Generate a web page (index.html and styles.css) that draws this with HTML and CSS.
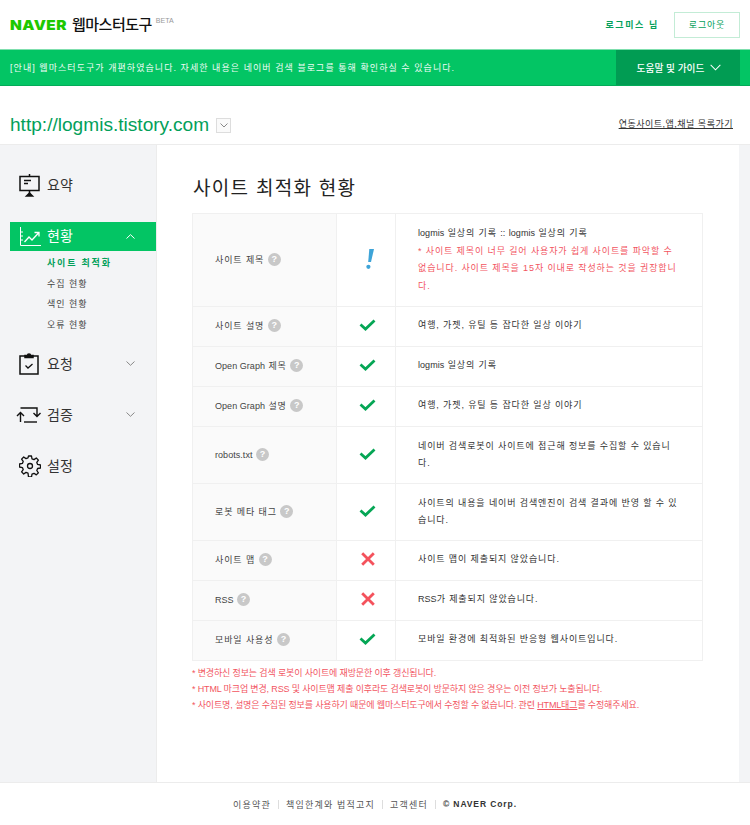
FILE: index.html
```html
<!DOCTYPE html>
<html lang="ko">
<head>
<meta charset="utf-8">
<title>네이버 웹마스터도구</title>
<link rel="stylesheet" href="styles.css">
</head>
<body>
<header class="top">
  <div class="brand"><span class="naver">NAVER</span><span class="wm">웹마스터도구</span><span class="beta">BETA</span></div>
  <div class="user"><span class="uname">로그미스 님</span><a class="logout">로그아웃</a></div>
</header>
<div class="notice">
  <p class="notice-text">[안내] 웹마스터도구가 개편하였습니다. 자세한 내용은 네이버 검색 블로그를 통해 확인하실 수 있습니다.</p>
  <div class="guide">도움말 및 가이드
    <svg class="guide-arrow" width="11" height="7" viewBox="0 0 12 7"><path d="M.7.7 6 6 11.3.7" fill="none" stroke="#fff" stroke-width="1.1"/></svg>
  </div>
</div>
<div class="siterow">
  <div class="site"><span class="siteurl">http://logmis.tistory.com</span>
    <span class="sitebtn"><svg width="8" height="5" viewBox="0 0 8 5"><path d="M.5.5 4 4 7.5.5" fill="none" stroke="#888"/></svg></span>
  </div>
  <a class="sitelink">연동사이트,앱,채널 목록가기</a>
</div>
<div class="body">
  <nav class="side">
    <div class="menu">
      <svg class="ico" width="22" height="24" viewBox="0 0 22 24" fill="none" stroke="#111" stroke-width="1.5"><path d="M1 3.5h19v14H1z"/><path d="M10.5 1v2.5M10.5 17.500v5"/><path d="M5 7.500h7M5 10.500h4" stroke-width="1.300"/><path d="M7.500 23l3-3 3 3z" fill="#111"/></svg>
      <span>요약</span>
    </div>
    <div class="menu on">
      <svg class="ico" width="22" height="20" viewBox="0 0 22 20" fill="none" stroke="#fff" stroke-width="1"><path d="M1.500 0v18.500H22"/><path d="M1.500 5H4M1.500 9H4M1.500 13H4"/><path d="M5.500 15l4.500-5 3 3 6.500-7M15.500 5.500h4.500v4" stroke-width="1.300"/></svg>
      <span>현황</span>
      <svg class="chev" width="9" height="5" viewBox="0 0 9 5"><path d="M.5 4.500 4.500.7l4 3.800" fill="none" stroke="#fff"/></svg>
    </div>
    <ul class="sub">
      <li class="cur">사이트 최적화</li>
      <li>수집 현황</li>
      <li>색인 현황</li>
      <li>오류 현황</li>
    </ul>
    <div class="menu m3">
      <svg class="ico" width="20" height="22" viewBox="0 0 20 22" fill="none" stroke="#111" stroke-width="1.500"><path d="M6 3H1v18h18V3h-5"/><path d="M6 4.500V2.500h2.500a1.500 1.500 0 0 1 3 0H14v2z" fill="#111"/><path d="M6.500 12.500l2.500 2.500 4.500-4" stroke-width="1.300"/></svg>
      <span>요청</span>
      <svg class="chev" width="9" height="5" viewBox="0 0 9 5"><path d="M.5.500l4 3.800 4-3.800" fill="none" stroke="#888"/></svg>
    </div>
    <div class="menu m4">
      <svg class="ico verify" width="26" height="16" viewBox="0 0 26 16" fill="none" stroke="#111" stroke-width="1.400"><path d="M4.500 15V6.500M1 9l3.500-3.500L8 9"/><path d="M4.500 1H21v8M17.500 6l3.500 3.500L24.500 6"/><path d="M8 15h13"/></svg>
      <span>검증</span>
      <svg class="chev" width="9" height="5" viewBox="0 0 9 5"><path d="M.5.500l4 3.800 4-3.800" fill="none" stroke="#888"/></svg>
    </div>
    <div class="menu m5">
      <svg class="ico" width="22" height="22" viewBox="0 0 22 22" fill="none" stroke="#111" stroke-width="1.300"><circle cx="11" cy="11" r="2.500"/><path d="M9.500 1h3l.5 2.800 2 .8 2.300-1.600 2.100 2.100-1.600 2.300.8 2 2.900.6v3l-2.900.5-.8 2 1.600 2.300-2.100 2.100-2.300-1.600-2 .8-.5 2.900h-3L9 18.200l-2-.8-2.300 1.600-2.100-2.100 1.600-2.300-.8-2L.500 12V9l2.900-.6.800-2-1.600-2.300 2.100-2.100L7 3.600l2-.8z" stroke-linejoin="round"/></svg>
      <span>설정</span>
    </div>
  </nav>
  <main class="main">
    <h1 class="title">사이트 최적화 현황</h1>
    <table class="tbl">
      <tr class="r93">
        <th>사이트 제목 <i class="q">?</i></th>
        <td class="st"><svg class="bang" width="8" height="20" viewBox="0 0 8 20"><path d="M3.300 0H8L5 13H2.200z" fill="#3ea4d8"/><circle cx="2.400" cy="17.800" r="2.100" fill="#3ea4d8"/></svg></td>
        <td class="tx"><span class="en">logmis</span> 일상의 기록 <span class="en">::</span> <span class="en">logmis</span> 일상의 기록<br><span class="warn">* 사이트 제목이 너무 길어 사용자가 쉽게 사이트를 파악할 수 없습니다. 사이트 제목을 15자 이내로 작성하는 것을 권장합니다.</span></td>
      </tr>
      <tr class="r40"><th>사이트 설명 <i class="q">?</i></th><td class="st"><svg class="ok" width="17" height="12" viewBox="0 0 17 12"><path d="M1.500 5.500 6.500 10 15.500 1.500" fill="none" stroke="#05a655" stroke-width="2.800"/></svg></td><td class="tx">여행, 가젯, 유틸 등 잡다한 일상 이야기</td></tr>
      <tr class="r40"><th><span class="en">Open Graph</span> 제목 <i class="q">?</i></th><td class="st"><svg class="ok" width="17" height="12" viewBox="0 0 17 12"><path d="M1.500 5.500 6.500 10 15.500 1.500" fill="none" stroke="#05a655" stroke-width="2.800"/></svg></td><td class="tx"><span class="en">logmis</span> 일상의 기록</td></tr>
      <tr class="r40"><th><span class="en">Open Graph</span> 설명 <i class="q">?</i></th><td class="st"><svg class="ok" width="17" height="12" viewBox="0 0 17 12"><path d="M1.500 5.500 6.500 10 15.500 1.500" fill="none" stroke="#05a655" stroke-width="2.800"/></svg></td><td class="tx">여행, 가젯, 유틸 등 잡다한 일상 이야기</td></tr>
      <tr class="r57"><th><span class="en">robots.txt</span> <i class="q">?</i></th><td class="st"><svg class="ok" width="17" height="12" viewBox="0 0 17 12"><path d="M1.500 5.500 6.500 10 15.500 1.500" fill="none" stroke="#05a655" stroke-width="2.800"/></svg></td><td class="tx">네이버 검색로봇이 사이트에 접근해 정보를 수집할 수 있습니다.</td></tr>
      <tr class="r57"><th>로봇 메타 태그 <i class="q">?</i></th><td class="st"><svg class="ok" width="17" height="12" viewBox="0 0 17 12"><path d="M1.500 5.500 6.500 10 15.500 1.500" fill="none" stroke="#05a655" stroke-width="2.800"/></svg></td><td class="tx">사이트의 내용을 네이버 검색엔진이 검색 결과에 반영 할 수 있습니다.</td></tr>
      <tr class="r40"><th>사이트 맵 <i class="q">?</i></th><td class="st"><svg width="14" height="14" viewBox="0 0 14 14"><path d="M1.200 1.200l11.600 11.600M12.800 1.200 1.200 12.800" stroke="#f4525c" stroke-width="2.800" fill="none"/></svg></td><td class="tx">사이트 맵이 제출되지 않았습니다.</td></tr>
      <tr class="r40"><th><span class="en">RSS</span> <i class="q">?</i></th><td class="st"><svg width="14" height="14" viewBox="0 0 14 14"><path d="M1.200 1.200l11.600 11.600M12.800 1.200 1.200 12.800" stroke="#f4525c" stroke-width="2.800" fill="none"/></svg></td><td class="tx"><span class="en">RSS</span>가 제출되지 않았습니다.</td></tr>
      <tr class="r40"><th>모바일 사용성 <i class="q">?</i></th><td class="st"><svg class="ok" width="17" height="12" viewBox="0 0 17 12"><path d="M1.500 5.500 6.500 10 15.500 1.500" fill="none" stroke="#05a655" stroke-width="2.800"/></svg></td><td class="tx">모바일 환경에 최적화된 반응형 웹사이트입니다.</td></tr>
    </table>
    <ul class="notes">
      <li>* 변경하신 정보는 검색 로봇이 사이트에 재방문한 이후 갱신됩니다.</li>
      <li>* HTML 마크업 변경, RSS 및 사이트맵 제출 이후라도 검색로봇이 방문하지 않은 경우는 이전 정보가 노출됩니다.</li>
      <li>* 사이트명, 설명은 수집된 정보를 사용하기 때문에 웹마스터도구에서 수정할 수 없습니다. 관련 <u>HTML태그</u>를 수정해주세요.</li>
    </ul>
  </main>
  <div class="rail"></div>
</div>
<footer class="foot">
  <span>이용약관</span><i class="sep"></i><span>책임한계와 법적고지</span><i class="sep"></i><span>고객센터</span><i class="sep"></i><span class="corp">© NAVER Corp.</span>
</footer>
</body>
</html>
```
FILE: styles.css
```css
* { box-sizing: border-box; }
html, body { margin: 0; padding: 0; }
body {
  width: 750px; height: 825px; overflow: hidden; background: #fff;
  display: flex; flex-direction: column;
  font-family: "Liberation Sans", "Noto Sans CJK KR", sans-serif;
  font-size: 9px; color: #333;
}
.top { height: 49px; flex: none; display: flex; justify-content: space-between; align-items: center; padding: 0 10px; }
.brand { display: flex; align-items: center; margin-top: 1px; }
.naver { display: block; font-family: Inter, "Liberation Sans", sans-serif; font-weight: 900; font-size: 13.500px; color: #1ec800; letter-spacing: .4px; width: 62px; transform: scaleX(1.14); transform-origin: left center; }
.wm { font-size: 15px; font-weight: 500; color: #111; letter-spacing: -.5px; line-height: 20px; }
.beta { font-size: 7px; color: #999; margin: -9px 0 0 4px; }
.user { display: flex; align-items: center; }
.uname { color: #03a05a; font-weight: 700; font-size: 9px; letter-spacing: 1.6px; margin-right: 15px; }
.logout { width: 66px; height: 26px; border: 1px solid #c3ecd6; color: #03a05a; display: flex; align-items: center; justify-content: center; font-size: 9px; letter-spacing: .8px; }
.notice { height: 37px; flex: none; background: #03c564; border-top: 1px solid #7fdfae; border-bottom: 1px solid #03ab58; display: flex; justify-content: space-between; align-items: stretch; padding: 0 10px; color: #fff; }
.notice-text { margin: 0; font-size: 9px; letter-spacing: 1.050px; line-height: 37px; color: #eefbf4; }
.guide { width: 124px; background: #019c53; display: flex; align-items: center; justify-content: center; gap: 6px; font-size: 9.700px; font-weight: 500; padding-left: 2px; }
.siterow { height: 59px; flex: none; border-bottom: 1px solid #ececec; display: flex; justify-content: space-between; padding: 0 17px 0 10px; align-items: flex-start; }
.site { display: flex; align-items: center; margin-top: 26px; }
.siteurl { font-size: 19.100px; color: #03a05a; line-height: 26px; }
.sitebtn { width: 15px; height: 15px; border: 1px solid #ddd; margin-left: 7px; display: flex; align-items: center; justify-content: center; background: #fafafa; }
.sitelink { margin-top: 31px; font-size: 9px; letter-spacing: .5px; text-decoration: underline; color: #333; }
.body { flex: 1; display: flex; min-height: 0; }
.side { width: 157px; flex: none; background: #f3f4f6; border-right: 1px solid #ececec; padding: 25px 0 0 10px; }
.menu { position: relative; height: 29px; width: 146px; display: flex; align-items: center; font-size: 14px; color: #333; padding-left: 9px; }
.menu .ico { flex: none; margin-right: 6px; }
.menu span { position: absolute; left: 37px; top: 5px; line-height: 20px; }
.menu.on { margin-top: 23px; background: #03c564; color: #fff; }
.menu.on span { top: 4px; }
.chev { position: absolute; left: 116px; top: 12px; }
.sub { list-style: none; margin: 0; padding: 2px 0 0 37px; }
.sub li { height: 20.500px; line-height: 20.500px; font-size: 9px; letter-spacing: 1px; color: #444; }
.sub .cur { color: #03a05a; font-weight: 700; letter-spacing: 1.800px; }
.m3 { margin-top: 14px; }
.m4 { margin-top: 22px; }
.m5 { margin-top: 22px; }
.verify { margin-left: -3px; }
.main { flex: 1; padding: 31px 0 0 35px; min-width: 0; }
.title { margin: 0 0 11px; height: 26px; line-height: 26px; font-size: 19px; font-weight: 400; color: #222; letter-spacing: 1.300px; padding-left: 1px; }
.tbl { width: 511px; border-collapse: collapse; table-layout: fixed; font-size: 9px; }
.tbl th, .tbl td { border: 1px solid #f0f0f0; padding: 0; }
.tbl th { width: 144px; background: #fafafa; text-align: left; font-weight: 400; padding: 0 0 1px 22px; letter-spacing: .9px; color: #444; }
.tbl .r40 th { padding-bottom: 3px; }
.tbl .st { width: 59px; text-align: center; padding: 0 0 2px 3px; }
.tbl .r40 .st { padding-bottom: 3px; }
.tbl .st svg { display: block; margin: 0 auto; }
.tbl .st .bang { transform: translateX(2px); }
.tbl .tx { padding: 0 22px; line-height: 17.500px; letter-spacing: .88px; color: #333; }
.tbl .r40 .tx { padding-bottom: 1px; }
.en { letter-spacing: .05px; }
.warn { color: #f2555f; }
.r93 { height: 93px; }
.r40 { height: 40px; }
.r57 { height: 57px; }
.q { display: inline-block; width: 13px; height: 13px; border-radius: 50%; background: #c8c8c8; color: #fff; font-style: normal; font-weight: 700; font-size: 9px; line-height: 13px; text-align: center; letter-spacing: 0; vertical-align: 1px; }
.notes { list-style: none; margin: 4px 0 0; padding: 0; color: #f2555f; font-size: 9px; letter-spacing: -.15px; }
.notes li { height: 16px; line-height: 16px; }
.rail { width: 11px; flex: none; background: #f3f4f6; }
.foot { height: 43px; flex: none; border-top: 1px solid #ececec; display: flex; align-items: center; justify-content: center; font-size: 9px; color: #555; letter-spacing: 1.200px; }
.sep { width: 1px; height: 9px; background: #ddd; margin: 0 7px; }
.corp { font-weight: 700; font-size: 8.500px; letter-spacing: .9px; color: #333; }
```
